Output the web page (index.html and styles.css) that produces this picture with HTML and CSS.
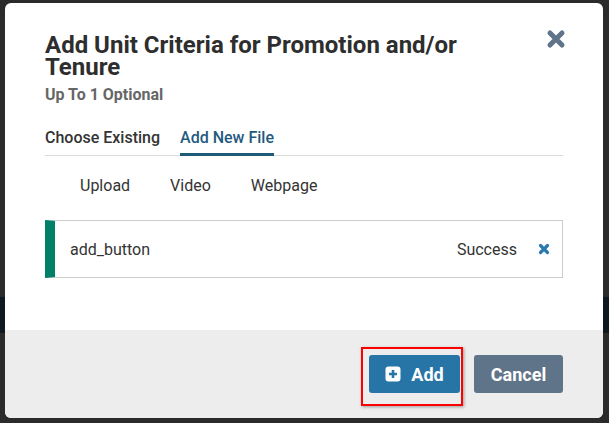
FILE: index.html
```html
<!DOCTYPE html>
<html lang="en">
<head>
    <meta charset="UTF-8">
    <meta name="viewport" content="width=device-width, initial-scale=1.0">
    <title>Add Unit Criteria</title>
    <link rel="stylesheet" href="styles.css">
</head>
<body>
    <div class="modal">
        <div class="modal-body">
            <div class="modal-header">
                <div class="modal-heading">
                    <h1 class="modal-title">Add Unit Criteria for Promotion and/or Tenure</h1>
                    <div class="modal-subtitle">Up To 1 Optional</div>
                </div>
                <button class="close-btn" aria-label="Close">
                    <svg width="20" height="20" viewBox="0 0 20 20">
                        <path d="M4 4 L16 16 M16 4 L4 16" stroke="#5f7489" stroke-width="5" stroke-linecap="round"/>
                    </svg>
                </button>
            </div>

            <div class="tabs">
                <span class="tab">Choose Existing</span>
                <span class="tab tab-active">Add New File</span>
            </div>

            <div class="sub-tabs">
                <span class="sub-tab">Upload</span>
                <span class="sub-tab">Video</span>
                <span class="sub-tab">Webpage</span>
            </div>

            <div class="file-row">
                <span class="file-name">add_button</span>
                <span class="file-status">Success</span>
                <svg class="file-remove" width="12" height="12" viewBox="0 0 12 12">
                    <path d="M2.5 2.5 L9.5 9.5 M9.5 2.5 L2.5 9.5" stroke="#2a7ab0" stroke-width="3.2" stroke-linecap="round"/>
                </svg>
            </div>
        </div>

        <div class="modal-footer">
            <button class="btn btn-add">
                <svg width="16" height="16" viewBox="0 0 16 16">
                    <rect x="0.5" y="0.5" width="15" height="15" rx="3" fill="#fff"/>
                    <path d="M8 4 V12 M4 8 H12" stroke="#2774a6" stroke-width="2.6"/>
                </svg>
                Add
            </button>
            <button class="btn btn-cancel">Cancel</button>
            <div class="highlight"></div>
        </div>
    </div>
</body>
</html>
```

FILE: styles.css
```css
body {
    margin: 0;
    height: 423px;
    overflow: hidden;
    font-family: Roboto, "Liberation Sans", sans-serif;
    background: linear-gradient(to bottom,
        #2b2b2b 0, #2b2b2b 297px,
        #0e1a20 297px, #0e1a20 333px,
        #2b2b2b 333px);
}

.modal {
    display: flex;
    flex-direction: column;
    width: 598px;
    height: 415px;
    margin: 3px 0 0 5px;
    background: #fff;
    border-radius: 6px;
    overflow: hidden;
}

.modal-body {
    padding: 31px 40px 0 40px;
}

.modal-header {
    display: flex;
    justify-content: space-between;
    align-items: flex-start;
}

.modal-heading {
    width: 470px;
}

.modal-title {
    margin: 0;
    font-size: 24px;
    line-height: 22px;
    font-weight: 700;
    color: #2e2e2e;
}

.modal-subtitle {
    margin-top: 7px;
    font-size: 16px;
    line-height: 19px;
    font-weight: 700;
    color: #666;
}

.close-btn {
    padding: 0;
    margin: -5px -3px 0 0;
    border: none;
    background: none;
    cursor: pointer;
}

.tabs {
    display: flex;
    gap: 20px;
    margin-top: 24px;
    border-bottom: 1px solid #dcdcdc;
}

.tab {
    padding-bottom: 6px;
    margin-bottom: -1px;
    font-size: 16px;
    line-height: 19px;
    font-weight: 500;
    color: #333;
    border-bottom: 3px solid transparent;
}

.tab-active {
    color: #1f5a80;
    border-bottom-color: #1f5a7a;
}

.sub-tabs {
    display: flex;
    gap: 40px;
    padding: 20px 0 0 35px;
}

.sub-tab {
    font-size: 16px;
    line-height: 19px;
    color: #333;
}

.file-row {
    display: flex;
    align-items: center;
    height: 56px;
    margin-top: 25px;
    border: 1px solid #ccc;
    border-left: 10px solid #008066;
}

.file-name {
    flex: 1;
    padding-left: 15px;
    font-size: 16px;
    color: #333;
}

.file-status {
    font-size: 16px;
    color: #333;
}

.file-remove {
    margin: 0 12px 0 21px;
}

.modal-footer {
    position: relative;
    display: flex;
    justify-content: flex-end;
    align-items: center;
    gap: 14px;
    margin-top: auto;
    height: 88px;
    padding-right: 40px;
    background: #ededed;
}

.btn {
    display: flex;
    align-items: center;
    justify-content: center;
    gap: 10px;
    height: 38px;
    border: none;
    border-radius: 3px;
    color: #fff;
    font-family: Roboto, "Liberation Sans", sans-serif;
    font-size: 18px;
    font-weight: 700;
    cursor: pointer;
}

.btn-add {
    width: 91px;
    background-color: #2774a6;
}

.btn-cancel {
    width: 89px;
    background-color: #5f7489;
}

.highlight {
    position: absolute;
    left: 356px;
    top: 17px;
    width: 98px;
    height: 55px;
    border: 2px solid #f00;
    box-shadow: 1px 1px 3px rgba(0, 0, 0, 0.35);
    pointer-events: none;
}
```
